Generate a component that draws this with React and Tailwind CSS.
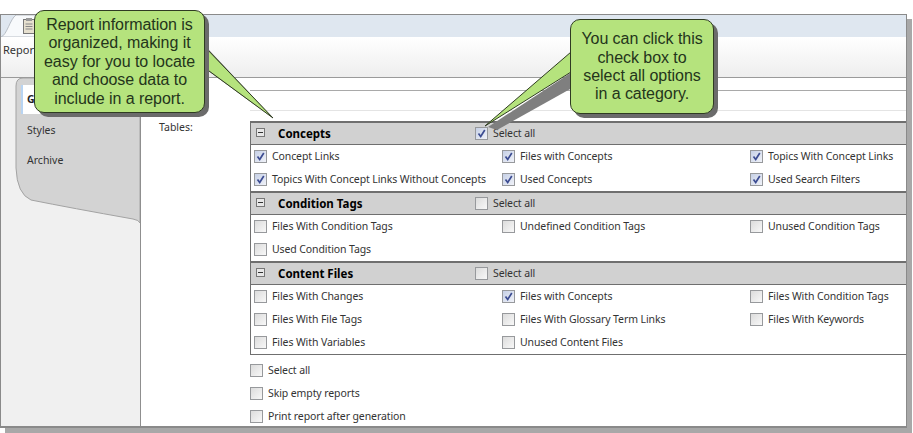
const uiFont = { fontFamily: '"Noto Sans", sans-serif' };

const sections = [
  {
    title: 'Concepts',
    selectAll: true,
    rows: [
      [['Concept Links', true], ['Files with Concepts', true], ['Topics With Concept Links', true]],
      [['Topics With Concept Links Without Concepts', true], ['Used Concepts', true], ['Used Search Filters', true]],
    ],
  },
  {
    title: 'Condition Tags',
    selectAll: false,
    rows: [
      [['Files With Condition Tags', false], ['Undefined Condition Tags', false], ['Unused Condition Tags', false]],
      [['Used Condition Tags', false]],
    ],
  },
  {
    title: 'Content Files',
    selectAll: false,
    rows: [
      [['Files With Changes', false], ['Files with Concepts', true], ['Files With Condition Tags', false]],
      [['Files With File Tags', false], ['Files With Glossary Term Links', false], ['Files With Keywords', false]],
      [['Files With Variables', false], ['Unused Content Files', false]],
    ],
  },
];

const CheckBox = ({ checked }) => (
  <span
    className={`flex h-[13px] w-[13px] shrink-0 items-center justify-center border border-[#97999c] ${
      checked ? 'bg-gradient-to-br from-[#c6d0e6] to-[#f0f2f8]' : 'bg-gradient-to-br from-[#dcdcdc] to-[#f8f8f8]'
    }`}
  >
    {checked && (
      <svg width="9" height="9" viewBox="0 0 9 9">
        <path d="M1.5 4.5 L3.7 7.5 L7.8 1" fill="none" stroke="#3c4c92" strokeWidth="1.7" />
      </svg>
    )}
  </span>
);

const Option = ({ label, checked }) => (
  <div className="flex items-center gap-[5px] text-[10.5px] tracking-[-0.1px] text-[#333]">
    <CheckBox checked={checked} />
    <span className="whitespace-nowrap">{label}</span>
  </div>
);

const Section = ({ section }) => (
  <div>
    <div className="flex h-[24px] items-center border-y border-t-2 border-y-[#6f6f6f] bg-[#d1d1d1]">
      <span className="mb-[3px] ml-[5px] flex h-[9px] w-[9px] items-center justify-center border border-[#777] bg-[#e8e8e8]">
        <span className="h-px w-[5px] bg-[#333]" />
      </span>
      <span className="ml-[13px] w-[197px] text-[11.5px] font-bold text-black">{section.title}</span>
      <div className="flex items-center gap-[5px] text-[10.5px] tracking-[-0.1px] text-[#333]">
        <CheckBox checked={section.selectAll} />
        <span>Select all</span>
      </div>
    </div>
    <div className="pl-[3px]">
      {section.rows.map((row, i) => (
        <div key={i} className="grid h-[23px] grid-cols-[248px_248px_1fr] items-center">
          {row.map(([label, checked]) => (
            <Option key={label} label={label} checked={checked} />
          ))}
        </div>
      ))}
    </div>
  </div>
);

const calloutClass =
  'absolute z-20 flex flex-col items-center justify-center rounded-[10px] border border-[#2f3b22] bg-[#b5e37d] pt-[1px] text-center text-[16px] leading-[18.4px] tracking-[-0.05px] text-[#24351b] shadow-[4px_4px_0_#6b6b6b]';

export default function App() {
  return (
    <div className="relative h-[433px] w-[913px] overflow-hidden bg-white" style={uiFont}>
      <div className="ml-0 mt-[14px] flex h-[414px] w-[907px] flex-col border border-b-2 border-[#8a8a8a] bg-white shadow-[5px_5px_0_#a8a8a8]">
        {/* Tab strip */}
        <div className="relative h-[22px] bg-[#dfe7f0]">
          <svg className="absolute left-0 top-0" width="120" height="22" viewBox="0 0 120 22">
            <path d="M0 22 C6 20 9 4 15 0 L120 0 L120 22 Z" fill="#f8fafc" stroke="#b8bec6" strokeWidth="1" />
          </svg>
          <svg className="absolute left-[22px] top-[3px]" width="12" height="16" viewBox="0 0 12 16">
            <rect x="0.5" y="1.5" width="11" height="14" fill="#e6e0cf" stroke="#777" />
            <rect x="3" y="0" width="6" height="3" fill="#999" />
            <path d="M2.5 6h7M2.5 8.5h7M2.5 11h7" stroke="#888" />
          </svg>
        </div>
        {/* Toolbar */}
        <div className="h-[41px] border-b border-[#9a9a9a] bg-gradient-to-b from-white to-[#eeeeee] pl-[2px] pt-[5px] text-[11px] text-[#333]">
          Report
        </div>
        <div className="flex min-h-0 flex-1">
          {/* Sidebar */}
          <div className="relative w-[140px] shrink-0 border-r border-[#8f8f8f] bg-[#f0f0f0] text-[10.5px] text-[#333]">
            <svg className="absolute left-0 top-0" width="139" height="150" viewBox="0 0 139 150">
              <path
                d="M139 0 L22 0 Q15 0 15 8 L15 90 Q16 116 30 122 Q70 130 132 141 Q138 142 139 145 Z"
                fill="#d3d3d3"
                stroke="#a3a3a3"
                strokeWidth="1"
              />
            </svg>
            <div className="relative ml-[20px] mt-[7px] flex h-[29px] items-center border-l-2 border-[#b8d4f2] bg-white pl-[4px] font-bold text-[#222]">
              General
            </div>
            <div className="relative ml-[26px] mt-[8px] leading-[16px]">Styles</div>
            <div className="relative ml-[26px] mt-[14px] leading-[16px]">Archive</div>
          </div>
          {/* Main */}
          <div className="flex min-w-0 flex-1">
            <div className="w-[109px] shrink-0 pl-[18px] pt-[41px] text-[10.5px] leading-[16px] text-[#333]">Tables:</div>
            <div className="min-w-0 flex-1">
              <div className="mt-[12px] h-[21px] border-b border-t border-b-[#e4e4e4] border-t-[#a9a9a9]" />
              <div className="mt-[10px] border-b border-l border-[#6f6f6f]">
                {sections.map((section) => (
                  <Section key={section.title} section={section} />
                ))}
              </div>
              <div className="mt-[4px]">
                {['Select all', 'Skip empty reports', 'Print report after generation'].map((label) => (
                  <div key={label} className="flex h-[23px] items-center">
                    <Option label={label} checked={false} />
                  </div>
                ))}
              </div>
            </div>
          </div>
        </div>
      </div>

      {/* Callout tails */}
      <svg className="absolute left-0 top-0 z-10" width="913" height="433" viewBox="0 0 913 433">
        <path d="M207 70 L273 118 L209 50 Z" fill="#6b6b6b" />
        <path d="M205 47 L273 118 L205 68 Z" fill="#b5e37d" stroke="#2f3b22" strokeWidth="1" />
        <path d="M572 72 L488 127 L497 130 L572 88 Z" fill="#7f7f7f" />
        <path d="M571 52 L485 126 L571 72 Z" fill="#b5e37d" stroke="#2f3b22" strokeWidth="1" />
      </svg>

      <div className={`${calloutClass} left-[34px] top-[10px] h-[103px] w-[171px]`} style={{ fontFamily: '"Liberation Sans", sans-serif' }}>
        <div>Report information is</div>
        <div>organized, making it</div>
        <div>easy for you to locate</div>
        <div>and choose data to</div>
        <div>include in a report.</div>
      </div>
      <div className={`${calloutClass} left-[570px] top-[19px] h-[95px] w-[144px]`} style={{ fontFamily: '"Liberation Sans", sans-serif' }}>
        <div>You can click this</div>
        <div>check box to</div>
        <div>select all options</div>
        <div>in a category.</div>
      </div>
    </div>
  );
}
